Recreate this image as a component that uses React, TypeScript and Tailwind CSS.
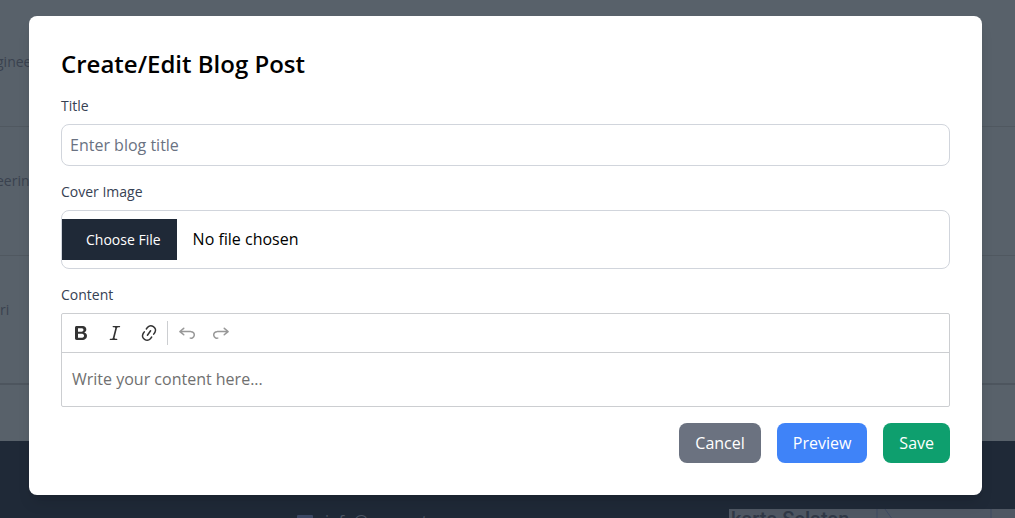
import type { ReactNode } from "react";

const ICONS = {
  bold: "M10.187 17H5.773c-.637 0-1.092-.138-1.364-.415-.273-.277-.409-.718-.409-1.323V4.738c0-.617.14-1.062.419-1.332.279-.27.73-.406 1.354-.406h4.68c.69 0 1.288.041 1.793.124.506.083.96.242 1.36.478.341.197.644.447.906.75a3.262 3.262 0 0 1 .808 2.162c0 1.401-.722 2.426-2.167 3.075C15.05 10.175 16 11.315 16 13.01a3.756 3.756 0 0 1-2.296 3.504 6.1 6.1 0 0 1-1.517.377c-.571.073-1.238.11-2 .11zm-.217-6.217H7v4.087h3.069c1.977 0 2.965-.69 2.965-2.072 0-.707-.256-1.22-.768-1.537-.512-.319-1.277-.478-2.296-.478zM7 5.13v3.619h2.606c.729 0 1.292-.067 1.69-.2a1.6 1.6 0 0 0 .91-.765c.165-.267.247-.566.247-.897 0-.707-.26-1.176-.778-1.409-.519-.232-1.31-.348-2.375-.348H7z",
  italic:
    "m9.586 14.633.021.004c-.036.335.095.655.393.962.082.083.173.15.274.201h1.474a.6.6 0 1 1 0 1.2H5.304a.6.6 0 0 1 0-1.2h1.15c.474-.07.809-.182 1.005-.334.157-.122.291-.32.404-.597l2.416-9.55a1.053 1.053 0 0 0-.281-.823 1.12 1.12 0 0 0-.442-.296H8.15a.6.6 0 0 1 0-1.2h6.443a.6.6 0 1 1 0 1.2h-1.195c-.376.056-.65.155-.823.296-.215.175-.423.439-.623.79l-2.366 9.347z",
  link: "m11.077 15 .991-1.416a.75.75 0 1 1 1.229.86l-1.148 1.64a.748.748 0 0 1-.217.206 5.251 5.251 0 0 1-8.503-5.955.741.741 0 0 1 .12-.274l1.147-1.639a.75.75 0 1 1 1.228.86L4.933 10.7l.006.003a3.75 3.75 0 0 0 6.132 4.294l.006.004zm5.494-5.335a.748.748 0 0 1-.12.274l-1.147 1.639a.75.75 0 1 1-1.228-.86l.86-1.23a3.75 3.75 0 0 0-6.144-4.301l-.86 1.229a.75.75 0 0 1-1.229-.86l1.148-1.64a.748.748 0 0 1 .217-.206 5.251 5.251 0 0 1 8.503 5.955zm-4.563-2.532a.75.75 0 0 1 .184 1.045l-3.155 4.505a.75.75 0 1 1-1.229-.86l3.155-4.506a.75.75 0 0 1 1.045-.184z",
  undo: "m5.042 9.367 2.189 1.837a.75.75 0 0 1-.965 1.149l-3.788-3.18a.747.747 0 0 1-.21-.284.75.75 0 0 1 .17-.945L6.23 4.762a.75.75 0 1 1 .964 1.15L4.863 7.866h8.917A.75.75 0 0 1 14 7.9a4 4 0 1 1-1.477 7.718l.344-1.489a2.5 2.5 0 1 0 1.094-4.73l.008-.032H5.042z",
  redo: "m14.958 9.367-2.189 1.837a.75.75 0 0 0 .965 1.149l3.788-3.18a.747.747 0 0 0 .21-.284.75.75 0 0 0-.17-.945L13.77 4.762a.75.75 0 1 0-.964 1.15l2.331 1.955H6.22A.75.75 0 0 0 6 7.9a4 4 0 1 0 1.477 7.718l-.344-1.489A2.5 2.5 0 1 1 6.039 9.4l-.008-.032h8.927z",
};

function ToolButton({ name, label, disabled }: { name: keyof typeof ICONS; label: string; disabled?: boolean }) {
  return (
    <button
      type="button"
      aria-label={label}
      disabled={disabled}
      className="flex size-8 items-center justify-center rounded-xs text-[#333333] disabled:opacity-50"
    >
      <svg viewBox="0 0 20 20" className="size-5" fill="currentColor">
        <path d={ICONS[name]} />
      </svg>
    </button>
  );
}

function ActionButton({ className, children }: { className: string; children: ReactNode }) {
  return (
    <button type="button" className={"rounded-lg px-4 py-2 text-white " + className}>
      {children}
    </button>
  );
}

function Backdrop() {
  return (
    <div aria-hidden="true" className="flex h-screen flex-col overflow-hidden bg-[#58616a] text-sm text-[#3a424f]">
      <div className="h-[127px] shrink-0 border-b border-[#505860] pt-[52px]">
        <span className="-ml-1">ginee</span>
      </div>
      <div className="h-[129px] shrink-0 border-b border-[#505860] pt-11">
        <span className="-ml-1">eerin</span>
      </div>
      <div className="h-[129px] shrink-0 border-b-2 border-[#4d555e] pt-11">ri</div>
      <div className="mt-14 flex grow justify-between bg-[#1f2937] pt-[68px]">
        <div className="flex gap-3 pl-[297px] text-base text-[#4b5563]">
          <svg viewBox="0 0 16 16" className="mt-1 size-4" fill="#3b4763">
            <path d="M1 2h14a1 1 0 0 1 1 1v10H0V3a1 1 0 0 1 1-1z" />
          </svg>
          <span>info@connect</span>
        </div>
        <div className="flex w-[286px] bg-[#4f5763] pl-0.5 font-[Roboto] text-xl leading-5 font-medium text-[#303846]">
          <span className="shrink-0 whitespace-nowrap">karta Selatan</span>
          <svg viewBox="0 0 160 20" className="h-5 w-40 shrink-0" fill="none" stroke="#3f4a63">
            <path d="M28 0v20M36 0l10 14M142 0v20" />
          </svg>
        </div>
      </div>
    </div>
  );
}

export default function App() {
  return (
    <div className="relative font-['Open_Sans',sans-serif]">
      <Backdrop />
      <div className="absolute inset-0 overflow-hidden pt-4 pr-[33px] pl-[29px]">
        <form role="dialog" aria-labelledby="dialog-title" className="rounded-lg bg-white p-8 shadow-lg">
          <h2 id="dialog-title" className="mb-4 text-2xl font-semibold text-black">
            Create/Edit Blog Post
          </h2>
          <div className="mb-4">
            <label htmlFor="title" className="mb-2 block text-sm text-gray-700">
              Title
            </label>
            <input
              id="title"
              type="text"
              placeholder="Enter blog title"
              className="block w-full rounded-lg border border-gray-300 p-2 placeholder:text-gray-500"
            />
          </div>
          <div className="mb-4">
            <label htmlFor="cover" className="mb-2 block text-sm text-gray-700">
              Cover Image
            </label>
            <input
              id="cover"
              type="file"
              className="block w-full rounded-lg border border-gray-300 py-2 text-black file:mr-4 file:h-[41px] file:bg-[#1f2937] file:pr-4 file:pl-6 file:text-sm file:text-white"
            />
          </div>
          <div className="mb-4">
            <label htmlFor="content" className="mb-2 block text-sm text-gray-700">
              Content
            </label>
            <div className="rounded-xs border border-[#ccced1]">
              <div role="toolbar" aria-label="Editor toolbar" className="flex h-[39px] items-center gap-0.5 border-b border-[#ccced1] px-[3px]">
                <ToolButton name="bold" label="Bold" />
                <ToolButton name="italic" label="Italic" />
                <ToolButton name="link" label="Link" />
                <span className="mr-px h-6 w-px bg-[#ccced1]" />
                <ToolButton name="undo" label="Undo" disabled />
                <ToolButton name="redo" label="Redo" disabled />
              </div>
              <textarea
                id="content"
                rows={1}
                placeholder="Write your content here..."
                className="block h-[53px] w-full resize-none px-2.5 py-3.5 placeholder:text-[#707070]"
              />
            </div>
          </div>
          <div className="flex justify-end gap-4">
            <ActionButton className="bg-[#6b7280]">Cancel</ActionButton>
            <ActionButton className="bg-[#3f83f8]">Preview</ActionButton>
            <ActionButton className="bg-[#0e9f6e]">Save</ActionButton>
          </div>
        </form>
      </div>
    </div>
  );
}
